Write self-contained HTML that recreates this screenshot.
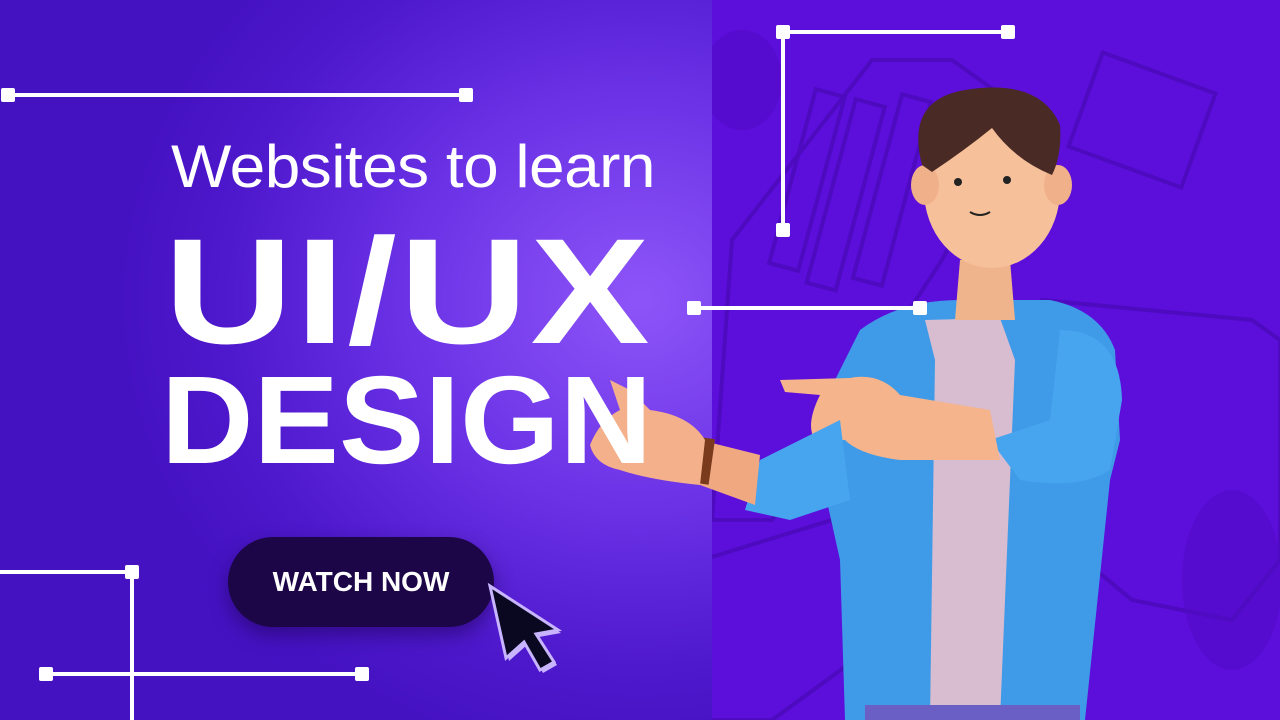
<!DOCTYPE html>
<html><head><meta charset="utf-8"><style>
*{margin:0;padding:0;box-sizing:border-box}
body{width:1280px;height:720px;overflow:hidden;position:relative;font-family:"Liberation Sans",sans-serif;background:#4a14c8}
.left{position:absolute;left:0;top:0;width:712px;height:720px;background:radial-gradient(ellipse 520px 460px at 640px 300px,#8d55f8 0%,#6b32e6 45%,#4e18cc 80%,#4512c2 100%)}
.right{position:absolute;left:712px;top:0;width:568px;height:720px;background:#5c0edb;overflow:hidden}
.sq{position:absolute;width:14px;height:14px;background:#fff;border-radius:2px;transform:translate(-7px,-7px)}
.h{position:absolute;height:4px;background:#fff;transform:translateY(-2px)}
.v{position:absolute;width:4px;background:#fff;transform:translateX(-2px)}
.t1{position:absolute;left:171px;top:132px;font-size:60px;color:#fff;letter-spacing:-0.5px;white-space:nowrap;transform-origin:0 0;transform:scaleX(1.066)}
.big{position:absolute;color:#fff;font-weight:bold;white-space:nowrap;transform-origin:0 0}
.btn{position:absolute;left:228px;top:537px;width:266px;height:90px;border-radius:45px;background:#1c0648;box-shadow:0 8px 18px rgba(30,0,80,.5);color:#fff;font-weight:bold;font-size:28px;line-height:90px;text-align:center}
</style></head><body>
<div class="left"></div>
<div class="right">
<svg width="568" height="720" style="position:absolute;left:0;top:0">
<g fill="none" stroke="#4a0bb8" stroke-width="4" opacity=".8">
<polygon points="20,240 160,60 240,60 310,110 230,260 60,520 0,520"/>
<rect x="80" y="90" width="30" height="180" transform="rotate(15 95 180)"/>
<rect x="120" y="100" width="30" height="190" transform="rotate(15 135 190)"/>
<rect x="165" y="95" width="30" height="190" transform="rotate(15 180 190)"/>
<polygon points="330,300 540,320 568,340 568,560 520,620 420,600 300,500"/>
<rect x="370" y="70" width="120" height="100" transform="rotate(20 430 120)"/>
<polygon points="-10,560 120,520 170,640 60,720 -10,720"/>
</g>
<g fill="#500bc4" opacity=".6"><ellipse cx="520" cy="580" rx="50" ry="90"/><ellipse cx="30" cy="80" rx="40" ry="50"/></g>
</svg>
</div>
<svg width="1280" height="720" style="position:absolute;left:0;top:0">
<path d="M860,330 Q900,300 960,300 L1050,300 Q1100,310 1115,350 L1120,440 L1110,480 L1085,720 L845,720 L840,560 L820,470 L835,380 Z" fill="#3f9be8"/>
<path d="M925,320 L1000,318 L1015,360 L1000,720 L930,720 L935,360 Z" fill="#d8bcd0"/>
<rect x="865" y="705" width="215" height="20" fill="#6a5fc4"/>
<path d="M960,260 L1010,260 L1015,320 L955,320 Z" fill="#f0b48c"/>
<ellipse cx="992" cy="190" rx="68" ry="78" fill="#f6c09a"/>
<ellipse cx="925" cy="185" rx="14" ry="20" fill="#f0b08a"/>
<ellipse cx="1058" cy="185" rx="14" ry="20" fill="#f0b08a"/>
<path d="M922,165 Q905,100 965,90 Q1040,78 1060,125 Q1062,155 1052,175 Q1015,160 992,128 Q965,150 932,172 Z" fill="#4a2a24"/>
<circle cx="958" cy="182" r="4" fill="#222"/><circle cx="1007" cy="180" r="4" fill="#222"/>
<path d="M970,212 Q980,218 990,212" stroke="#222" stroke-width="2" fill="none"/>
<path d="M1060,330 Q1120,330 1122,400 L1110,470 Q1080,490 1020,480 L990,440 L1050,420 Z" fill="#47a4ee"/>
<path d="M780,380 L850,378 Q880,372 900,395 L990,410 L1000,460 L900,460 Q860,455 845,440 L815,440 Q805,425 820,395 L785,392 Z" fill="#f5b48c"/>
<path d="M760,460 L840,420 L850,500 L790,520 L745,510 Z" fill="#47a4ee"/>
<path d="M700,440 L760,455 L755,505 L700,485 Z" fill="#f0a880"/>
<rect x="698" y="438" width="14" height="46" fill="#7a3a1c" transform="rotate(8 705 460)"/>
<path d="M590,445 Q600,420 620,410 L610,380 L630,390 L650,410 Q690,415 705,440 L700,485 Q650,480 620,470 Q595,465 590,445 Z" fill="#f3b08a"/>
</svg>
<div class="h" style="left:8px;top:95px;width:458px"></div><div class="sq" style="left:8px;top:95px"></div><div class="sq" style="left:466px;top:95px"></div>
<div class="h" style="left:783px;top:32px;width:225px"></div><div class="v" style="left:783px;top:32px;height:198px"></div>
<div class="sq" style="left:783px;top:32px"></div><div class="sq" style="left:1008px;top:32px"></div><div class="sq" style="left:783px;top:230px"></div>
<div class="h" style="left:694px;top:308px;width:226px"></div><div class="sq" style="left:694px;top:308px"></div><div class="sq" style="left:920px;top:308px"></div>
<div class="h" style="left:0;top:572px;width:132px"></div><div class="v" style="left:132px;top:572px;height:148px"></div><div class="sq" style="left:132px;top:572px"></div>
<div class="h" style="left:46px;top:674px;width:316px"></div><div class="sq" style="left:46px;top:674px"></div><div class="sq" style="left:362px;top:674px"></div>
<div class="t1">Websites to learn</div>
<div class="big" style="left:164px;top:205px;font-size:150px;letter-spacing:2px;transform:scaleX(1.19)">UI/UX</div>
<div class="big" style="left:161px;top:349px;font-size:125px;transform:scaleX(1.025)">DESIGN</div>
<div class="btn">WATCH NOW</div>
<svg width="100" height="100" style="position:absolute;left:484px;top:580px">
<polygon points="6,6 74,50 52,54 70,82 56,90 40,62 22,78" fill="#c8b4ff" transform="translate(3,3)"/>
<polygon points="6,6 74,50 52,54 70,82 56,90 40,62 22,78" fill="#0a0820" stroke="#c8b4ff" stroke-width="3"/>
</svg>
</body></html>
